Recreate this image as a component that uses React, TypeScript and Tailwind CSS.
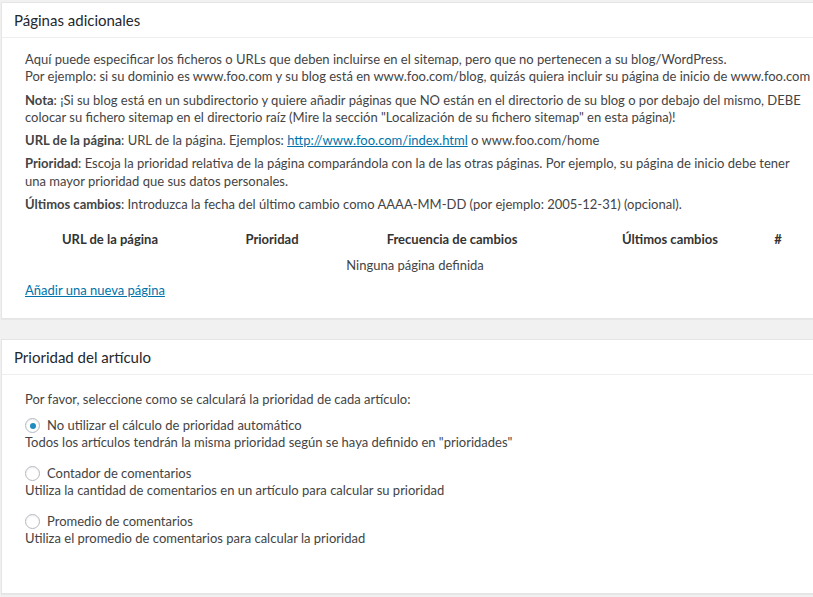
import { useState } from 'react'

const font = { fontFamily: 'Lato, "Open Sans", sans-serif' }

function Postbox({ title, children }: { title: string; children: React.ReactNode }) {
  return (
    <section className="ml-[1px] w-[837px] border border-[#e5e5e5] bg-white shadow-[0_1px_1px_rgba(0,0,0,0.04)]">
      <h3 className="border-b border-[#eeeeee] px-3 py-[9px] text-[15px] leading-[16px] text-[#23282d]">{title}</h3>
      {children}
    </section>
  )
}

function Radio({ checked, onClick }: { checked: boolean; onClick: () => void }) {
  return (
    <span
      onClick={onClick}
      className="mr-[7px] inline-flex h-[15px] w-[15px] shrink-0 items-center justify-center rounded-full border border-[#b4b9be] bg-white shadow-[inset_0_1px_2px_rgba(0,0,0,0.07)]"
    >
      {checked && <span className="h-[6px] w-[6px] rounded-full bg-[#1e8cbe]" />}
    </span>
  )
}

const options = [
  {
    label: 'No utilizar el cálculo de prioridad automático',
    desc: 'Todos los artículos tendrán la misma prioridad según se haya definido en "prioridades"',
  },
  {
    label: 'Contador de comentarios',
    desc: 'Utiliza la cantidad de comentarios en un artículo para calcular su prioridad',
  },
  {
    label: 'Promedio de comentarios',
    desc: 'Utiliza el promedio de comentarios para calcular la prioridad',
  },
]

export default function App() {
  const [priority, setPriority] = useState(0)

  return (
    <div className="min-h-[597px] overflow-hidden bg-[#f1f1f1] pt-[2px] text-[13px] text-[#444444]" style={font}>
      <Postbox title="Páginas adicionales">
        <div className="pb-[19px] pl-[23px] pr-[23px] pt-[13px] leading-[17.3px]">
          <div className="w-[789px]">
            <p>
              Aquí puede especificar los ficheros o URLs que deben incluirse en el sitemap, pero que no pertenecen a su blog/WordPress.
              <br />
              Por ejemplo: si su dominio es www.foo.com y su blog está en www.foo.com/blog, quizás quiera incluir su página de inicio de www.foo.com
            </p>
            <p className="mt-[6px]">
              <b className="font-bold">Nota</b>: ¡Si su blog está en un subdirectorio y quiere añadir páginas que NO están en el directorio de su blog o por debajo del mismo, DEBE colocar su fichero sitemap en el directorio raíz (Mire la sección "Localización de su fichero sitemap" en esta página)!
            </p>
            <p className="mt-[6px]">
              <b className="font-bold">URL de la página</b>: URL de la página. Ejemplos:{' '}
              <a href="#" className="text-[#0073aa] underline">http://www.foo.com/index.html</a> o www.foo.com/home
            </p>
            <p className="mt-[6px] w-[778px]">
              <b className="font-bold">Prioridad</b>: Escoja la prioridad relativa de la página comparándola con la de las otras páginas. Por ejemplo, su página de inicio debe tener una mayor prioridad que sus datos personales.
            </p>
            <p className="mt-[6px]">
              <b className="font-bold">Últimos cambios</b>: Introduzca la fecha del último cambio como AAAA-MM-DD (por ejemplo: 2005-12-31) (opcional).
            </p>
          </div>
          <table className="mt-[14px] w-[766px] text-center">
            <thead>
              <tr className="text-[#333333]">
                <th className="w-[170px] py-[4px] font-bold">URL de la página</th>
                <th className="w-[154px] py-[4px] font-bold">Prioridad</th>
                <th className="w-[206px] py-[4px] font-bold">Frecuencia de cambios</th>
                <th className="w-[210px] py-[4px] pl-[20px] font-bold">Últimos cambios</th>
                <th className="w-[26px] py-[4px] font-bold">#</th>
              </tr>
            </thead>
            <tbody>
              <tr>
                <td colSpan={5} className="py-[4px] pl-[14px]">Ninguna página definida</td>
              </tr>
            </tbody>
          </table>
          <a href="#" className="mt-[4px] inline-block text-[#0073aa] underline">Añadir una nueva página</a>
        </div>
      </Postbox>

      <div className="h-[20px]" />

      <Postbox title="Prioridad del artículo">
        <div className="px-[23px] pb-[46px] pt-[16px] leading-[17px]">
          <p>Por favor, seleccione como se calculará la prioridad de cada artículo:</p>
          {options.map((o, i) => (
            <div key={o.label} className={i === 0 ? 'mt-[9px]' : 'mt-[14px]'}>
              <label className="flex items-center" onClick={() => setPriority(i)}>
                <Radio checked={priority === i} onClick={() => setPriority(i)} />
                {o.label}
              </label>
              <div>{o.desc}</div>
            </div>
          ))}
        </div>
      </Postbox>
    </div>
  )
}
